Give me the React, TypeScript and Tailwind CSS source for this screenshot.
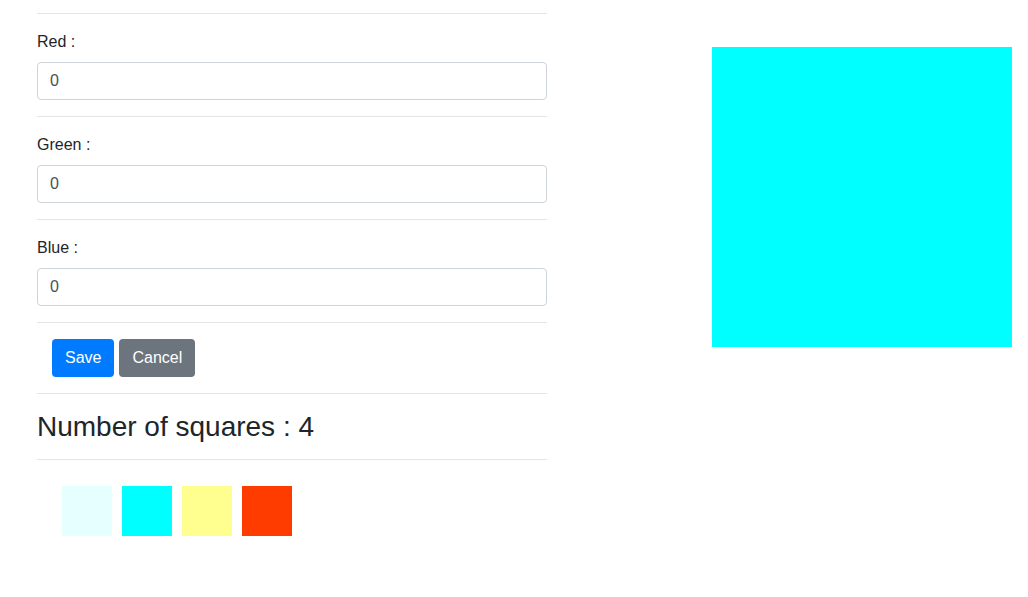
import React from "react";

const fields = ["Red", "Green", "Blue"];
const squares = ["#e6ffff", "#00ffff", "#ffff8f", "#ff3c00"];

const Hr = () => <div className="h-px bg-black/10 my-4" />;

const App = () => {
  return (
    <div
      className="flex w-full text-[#212529] text-base leading-6"
      style={{ fontFamily: '"Liberation Sans", Arial, sans-serif' }}
    >
      <div className="w-[510px] ml-[37px] -mt-[3px]">
        <Hr />
        {fields.map((f) => (
          <div key={f}>
            <label className="block mb-2">{f} :</label>
            <input
              type="text"
              defaultValue="0"
              className="block w-full h-[38px] px-3 border border-[#ced4da] rounded text-[#495057] outline-none"
            />
            <Hr />
          </div>
        ))}
        <div className="px-[15px] flex gap-[5px]">
          <button className="h-[38px] px-[13px] rounded bg-[#007bff] text-white">Save</button>
          <button className="h-[38px] px-[13px] rounded bg-[#6c757d] text-white">Cancel</button>
        </div>
        <Hr />
        <h3 className="text-[28px] leading-[33px]">Number of squares : 4</h3>
        <Hr />
        <div className="flex gap-[10px] pl-[25px] pt-[10px]">
          {squares.map((c) => (
            <div key={c} className="w-[50px] h-[50px]" style={{ backgroundColor: c }} />
          ))}
        </div>
      </div>
      <div className="ml-auto mr-[16px] mt-[47px] w-[300px] h-[300px] bg-[#00ffff]" />
    </div>
  );
};

export default App;
